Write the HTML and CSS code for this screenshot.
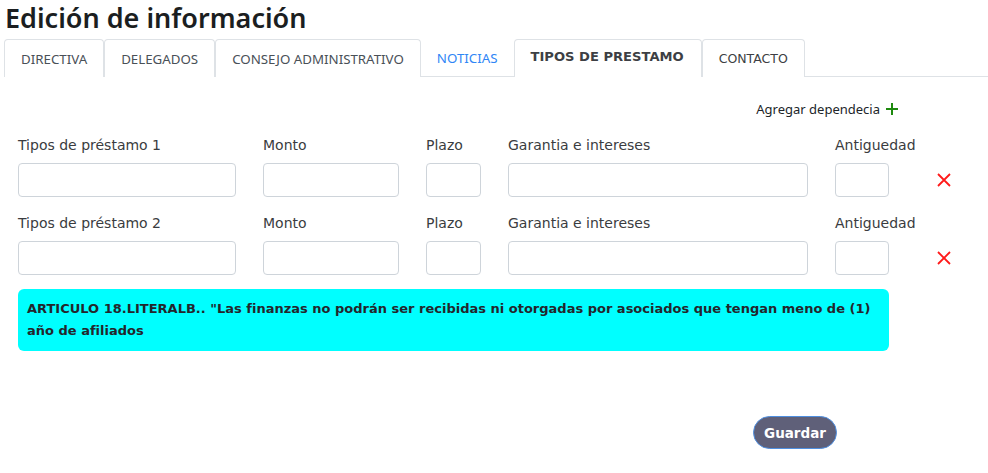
FILE: index.html
```html
<!DOCTYPE html>
<html lang="es">
<head>
<meta charset="utf-8">
<link rel="stylesheet" href="styles.css">
</head>
<body>
<h2 class="title">Edición de información</h2>
<nav class="tabs">
  <a class="tab boxed">DIRECTIVA</a>
  <a class="tab boxed">DELEGADOS</a>
  <a class="tab boxed">CONSEJO ADMINISTRATIVO</a>
  <a class="tab link">NOTICIAS</a>
  <a class="tab boxed active">TIPOS DE PRESTAMO</a>
  <a class="tab boxed mont">CONTACTO</a>
</nav>
<div class="content">
  <div class="add-row">
    <span class="add">Agregar dependecia</span>
    <svg class="plus" width="14" height="14" viewBox="0 0 14 14"><path d="M7 1v12M1 7h12" stroke="#1e8a0e" stroke-width="2" fill="none"/></svg>
  </div>
  <div class="row">
    <label class="lbl">Tipos de préstamo 1</label>
    <label class="lbl">Monto</label>
    <label class="lbl">Plazo</label>
    <label class="lbl">Garantia e intereses</label>
    <label class="lbl">Antiguedad</label>
    <span></span>
    <input class="inp" type="text">
    <input class="inp" type="text">
    <input class="inp" type="text">
    <input class="inp" type="text">
    <input class="inp" type="text">
    <svg class="del" width="14" height="14" viewBox="0 0 14 14"><path d="M1 1l12 12M13 1L1 13" stroke="#ff1a1a" stroke-width="1.8" fill="none"/></svg>
  </div>
  <div class="row">
    <label class="lbl">Tipos de préstamo 2</label>
    <label class="lbl">Monto</label>
    <label class="lbl">Plazo</label>
    <label class="lbl">Garantia e intereses</label>
    <label class="lbl">Antiguedad</label>
    <span></span>
    <input class="inp" type="text">
    <input class="inp" type="text">
    <input class="inp" type="text">
    <input class="inp" type="text">
    <input class="inp" type="text">
    <svg class="del" width="14" height="14" viewBox="0 0 14 14"><path d="M1 1l12 12M13 1L1 13" stroke="#ff1a1a" stroke-width="1.8" fill="none"/></svg>
  </div>
  <div class="notice">ARTICULO 18.LITERALB.. "Las finanzas no podrán ser recibidas ni otorgadas por asociados que tengan meno de (1)<br>año de afiliados</div>
  <div class="actions">
    <button class="save">Guardar</button>
  </div>
</div>
</body>
</html>
```
FILE: styles.css
```css
html, body {
  margin: 0;
  padding: 0;
  background: #fff;
}
body {
  font-family: "Noto Sans", "Open Sans", sans-serif;
  color: #212529;
  width: 988px;
  height: 473px;
  overflow: hidden;
}
.title {
  margin: 0;
  padding: 0 0 0 5px;
  height: 39px;
  font-size: 27px;
  font-weight: 600;
  line-height: 35px;
  color: #1b1e21;
}
.tabs {
  display: flex;
  margin-left: 4px;
  height: 37px;
  border-bottom: 1px solid #dee2e6;
}
.tab {
  display: flex;
  align-items: center;
  padding: 0 16px;
  font-size: 13.3px;
  color: #495057;
  border: 1px solid transparent;
  border-bottom: none;
  border-radius: 4px 4px 0 0;
  box-sizing: border-box;
  margin-bottom: -1px;
  height: 38px;
}
.tab.boxed {
  border-color: #dee2e6;
  background: #fff;
}
.tab.link {
  color: #2f86f6;
  border: none;
  height: 37px;
  margin-bottom: 0;
  padding: 0 16px 0 16px;
}
.tab.active {
  font-family: "DejaVu Sans", sans-serif;
  font-weight: bold;
  font-size: 13.1px;
  color: #3d3f44;
  padding: 0 17px 4px 16px;
}
.tab.mont {
  font-family: "DejaVu Sans", sans-serif;
  font-size: 12.5px;
  color: #3d3f44;
}
.content {
  padding-left: 18px;
}
.add-row {
  display: flex;
  align-items: center;
  justify-content: flex-end;
  width: 881px;
  height: 22px;
  margin-top: 21px;
  gap: 5px;
}
.add {
  font-size: 13px;
  color: #212529;
}
.plus {
  display: block;
}
.row {
  display: grid;
  grid-template-columns: 218px 136px 55px 300px 54px auto;
  column-gap: 27px;
  align-items: center;
  margin-top: 16px;
}
.row + .row {
  margin-top: 17px;
}
.lbl {
  font-family: "DejaVu Sans", sans-serif;
  font-weight: normal;
  font-size: 14px;
  color: #3a3c40;
  line-height: 18px;
  margin-bottom: 9px;
}
.inp {
  box-sizing: border-box;
  width: 100%;
  height: 34px;
  border: 1px solid #ced4da;
  border-radius: 4px;
  margin: 0;
  background: #fff;
}
.del {
  margin-left: 21px;
}
.notice {
  box-sizing: border-box;
  width: 871px;
  margin-top: 14px;
  background: #00ffff;
  border-radius: 6px;
  padding: 9px 9px 9px 9px;
  font-family: "DejaVu Sans", sans-serif;
  font-weight: bold;
  font-size: 13px;
  line-height: 22px;
  color: #23262c;
}
.actions {
  display: flex;
  justify-content: flex-end;
  width: 819px;
  margin-top: 65px;
}
.save {
  width: 84px;
  height: 33px;
  border-radius: 17px;
  background: #5f6079;
  border: 1px solid #4f8fe0;
  color: #fff;
  font-family: "DejaVu Sans", sans-serif;
  font-weight: bold;
  font-size: 13.5px;
  padding: 0;
}
```
